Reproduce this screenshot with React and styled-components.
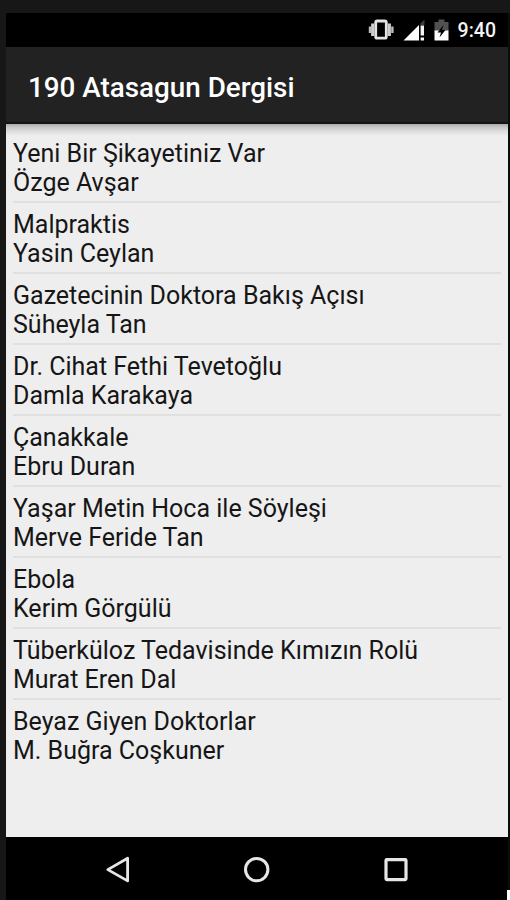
import React from 'react';
import styled, { createGlobalStyle } from 'styled-components';

const ARTICLES = [
  { title: 'Yeni Bir Şikayetiniz Var', author: 'Özge Avşar' },
  { title: 'Malpraktis', author: 'Yasin Ceylan' },
  { title: 'Gazetecinin Doktora Bakış Açısı', author: 'Süheyla Tan' },
  { title: 'Dr. Cihat Fethi Tevetoğlu', author: 'Damla Karakaya' },
  { title: 'Çanakkale', author: 'Ebru Duran' },
  { title: 'Yaşar Metin Hoca ile Söyleşi', author: 'Merve Feride Tan' },
  { title: 'Ebola', author: 'Kerim Görgülü' },
  { title: 'Tüberküloz Tedavisinde Kımızın Rolü', author: 'Murat Eren Dal' },
  { title: 'Beyaz Giyen Doktorlar', author: 'M. Buğra Coşkuner' },
];

function StatusIcons() {
  return (
    <Icon width="84" height="24" viewBox="0 0 84 24">
      {/* Vibrate */}
      <rect x="9.7" y="3" width="10.6" height="17.2" rx="1.5" fill="none" stroke="#e4e4e4" strokeWidth="2.8" />
      <path d="M6.7 5.5v12.5M23.3 5.5v12.5" stroke="#cfcfcf" strokeWidth="3.2" />
      <path d="M4 8.5v6.5M26.4 8.5v6.5" stroke="#bdbdbd" strokeWidth="2.4" />
      {/* Signal */}
      <path d="M37.5 22.5L53 7V22.5Z" fill="#fff" />
      <path d="M54.2 5.8L58.5 1.5V7H54.2Z" fill="#3c3c3c" />
      <path d="M54.6 7.5H58V17.5H54.6ZM54.6 19.5H58V22.5H54.6Z" fill="#f4f4f4" />
      {/* Battery */}
      <path d="M68.5 4H72.5V1.5H78.5V4H82.5V13H68.5Z" fill="#515151" />
      <path d="M68.5 12.5H82.5V22.5H68.5Z" fill="#fff" />
      <path d="M77.5 7L71.5 14.5H75L73.5 19.5L79.5 12H76Z" fill="#000" />
    </Icon>
  );
}

function App() {
  return (
    <>
      <GlobalStyle />
      <Backdrop>
        <Phone>
          <StatusBar>
            <StatusIcons />
            <Clock>9:40</Clock>
          </StatusBar>
          <ActionBar>
            <Heading>190 Atasagun Dergisi</Heading>
          </ActionBar>
          <List>
            {ARTICLES.map(({ title, author }) => (
              <Row key={title}>
                <Line>{title}</Line>
                <Line>{author}</Line>
              </Row>
            ))}
          </List>
          <NavBar>
            <NavButton aria-label="Back">
              <Icon width="28" height="28" viewBox="0 0 28 28">
                <path d="M23.6 2.3V24.9L3.8 13.6Z" fill="none" stroke="#e6e6e6" strokeWidth="2.8" strokeLinejoin="round" />
              </Icon>
            </NavButton>
            <NavButton aria-label="Home">
              <Icon width="28" height="28" viewBox="0 0 28 28">
                <circle cx="13.7" cy="13.6" r="11.2" fill="none" stroke="#e6e6e6" strokeWidth="3" />
              </Icon>
            </NavButton>
            <NavButton aria-label="Recent apps">
              <Icon width="28" height="28" viewBox="0 0 28 28">
                <rect x="4" y="3.6" width="20" height="20" rx="0.8" fill="none" stroke="#e6e6e6" strokeWidth="3.2" />
              </Icon>
            </NavButton>
          </NavBar>
        </Phone>
        <Corner />
      </Backdrop>
    </>
  );
}

const GlobalStyle = createGlobalStyle`
  *,
  *::before,
  *::after {
    box-sizing: border-box;
  }

  body {
    margin: 0;
    font-family: Roboto, sans-serif;
  }

  h1,
  p,
  ul {
    margin: 0;
    padding: 0;
  }
`;

const Backdrop = styled.div`
  position: relative;
  width: 510px;
  height: 900px;
  padding: 13px 0 0 6px;
  background-color: #171717;
  overflow: hidden;
`;

const Phone = styled.main`
  display: flex;
  flex-direction: column;
  height: 100%;
  background-color: #000;
  border-right: 2px solid #0c0c0c;
`;

const StatusBar = styled.div`
  display: flex;
  flex-shrink: 0;
  align-items: center;
  justify-content: flex-end;
  gap: 8px;
  height: 34px;
  padding-right: 12px;
`;

const Clock = styled.span`
  color: #f4f4f4;
  font-size: 19.5px;
  font-weight: 500;
`;

const ActionBar = styled.header`
  display: flex;
  flex-shrink: 0;
  align-items: center;
  height: 77px;
  padding: 7px 22px 0;
  background-color: #222;
  border-bottom: 2px solid #141414;
`;

const Heading = styled.h1`
  color: #fff;
  font-size: 27.8px;
  font-weight: 500;
  line-height: 32px;
  white-space: nowrap;
`;

const List = styled.ul`
  flex-shrink: 0;
  height: 713px;
  padding: 8px 7px 0;
  background: linear-gradient(#aaa 0, #c6c6c6 3px, #dcdcdc 7px, #eee 12px);
  list-style: none;
`;

const Row = styled.li`
  height: 71px;
  padding-top: 7px;

  &:not(:last-child) {
    border-bottom: 2px solid #e0e0e0;
  }
`;

const Line = styled.p`
  color: #161616;
  font-size: 25px;
  line-height: 29px;
  white-space: nowrap;
`;

const NavBar = styled.nav`
  display: flex;
  justify-content: center;
  gap: 111px;
  padding-top: 19px;
`;

const NavButton = styled.button`
  display: flex;
  height: 28px;
  padding: 0;
  border: 0;
  background: none;
`;

const Icon = styled.svg`
  display: block;
`;

/* Light notch over the bottom right edge of the frame */
const Corner = styled.div`
  position: absolute;
  right: 0;
  bottom: 0;
  width: 3px;
  height: 10px;
  background-color: #fff;
`;

export default App;
